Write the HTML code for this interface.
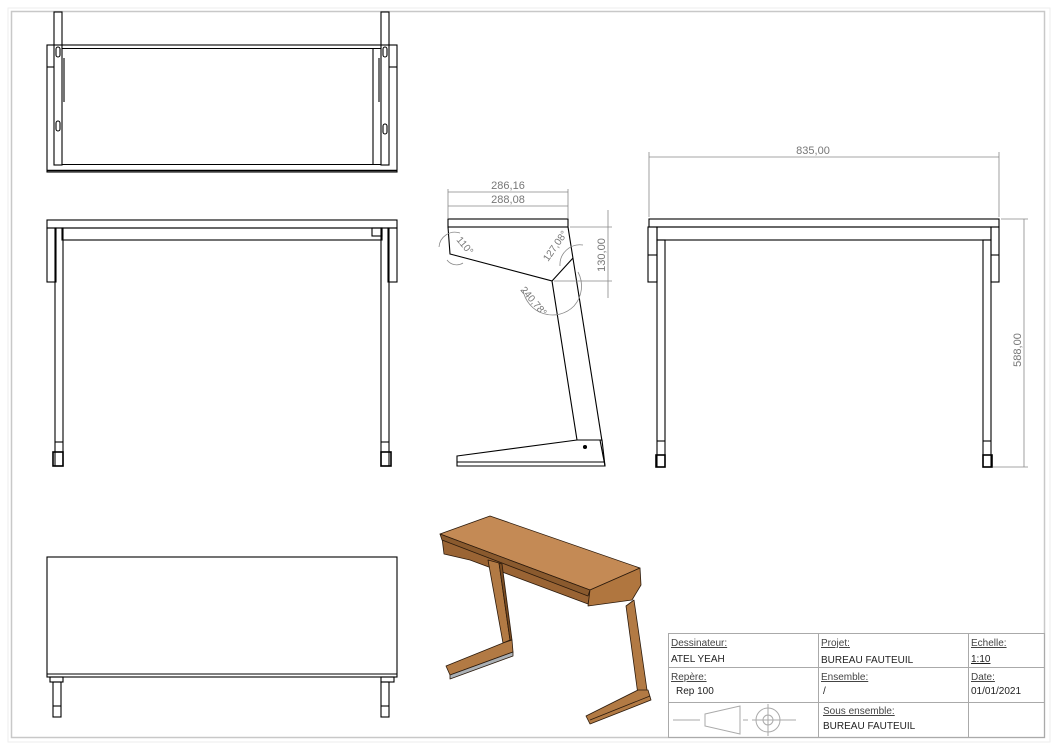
<!DOCTYPE html>
<html><head><meta charset="utf-8"><style>
html,body{margin:0;padding:0;background:#fff;}
svg{display:block;}
text{font-family:"Liberation Sans",sans-serif;}
</style></head><body>
<svg width="1058" height="748" viewBox="0 0 1058 748" xmlns="http://www.w3.org/2000/svg">
<rect x="0" y="0" width="1058" height="748" fill="#fff"/>
<rect x="11.5" y="11.5" width="1033" height="726" fill="none" stroke="#c8c8c8" stroke-width="1.5"/>
<rect x="8" y="8" width="1042" height="734" fill="none" stroke="#eee" stroke-width="1"/>

<g fill="none" stroke="#000" stroke-width="1.1">
<rect x="47" y="45" width="350" height="127"/>
<rect x="54" y="12" width="8" height="153"/>
<rect x="381" y="12" width="8" height="153"/>
<line x1="62" y1="48.5" x2="381" y2="48.5"/>
<line x1="62" y1="164.5" x2="381" y2="164.5"/>
<line x1="47" y1="170.5" x2="397" y2="170.5" stroke-width="1.5"/>
<line x1="47" y1="67" x2="54" y2="67"/>
<line x1="389" y1="67" x2="397" y2="67"/>
<line x1="64" y1="58" x2="64" y2="102"/>
<line x1="379" y1="58" x2="379" y2="102"/>
<line x1="373" y1="48.5" x2="373" y2="164.5"/>
<rect x="56" y="47" width="4" height="10" rx="2"/>
<rect x="56" y="121" width="4" height="10" rx="2"/>
<rect x="383" y="47" width="4" height="10" rx="2"/>
<rect x="383" y="124" width="4" height="10" rx="2"/>

<rect x="47" y="220" width="350" height="8"/>
<rect x="62" y="228" width="320" height="12"/>
<rect x="47" y="228" width="9" height="54"/>
<rect x="388" y="228" width="9" height="54"/>
<rect x="55" y="228" width="8" height="238"/>
<rect x="381" y="228" width="8" height="238"/>
<line x1="55" y1="442" x2="63" y2="442"/>
<line x1="381" y1="442" x2="389" y2="442"/>
<rect x="53" y="452" width="10" height="14" stroke-width="1.6"/>
<rect x="381" y="452" width="10" height="14" stroke-width="1.6"/>
<rect x="372" y="228" width="10" height="8"/>

<rect x="47" y="557" width="350" height="120"/>
<line x1="47" y1="674" x2="397" y2="674"/>
<rect x="50" y="677" width="13" height="5"/>
<rect x="381" y="677" width="13" height="5"/>
<rect x="53" y="682" width="8" height="35"/>
<rect x="381" y="682" width="8" height="35"/>
<line x1="53" y1="706" x2="61" y2="706"/>
<line x1="381" y1="706" x2="389" y2="706"/>

<rect x="448" y="219" width="120" height="8"/>
<polyline points="448,227 450,254 552,281 577,440"/>
<line x1="568" y1="227" x2="602" y2="441"/>
<line x1="552" y1="281" x2="573" y2="258"/>
<polygon points="457,456 577,440 602,440 605,466 457,466"/>
<line x1="457" y1="462" x2="605" y2="462"/>
<line x1="600" y1="440" x2="605" y2="466"/>
<circle cx="585" cy="447" r="1.5" fill="#000"/>

<rect x="649" y="219" width="350" height="8"/>
<rect x="657" y="227" width="334" height="13"/>
<rect x="648" y="227" width="9" height="55"/>
<rect x="991" y="227" width="8" height="55"/>
<rect x="657" y="240" width="8" height="227"/>
<rect x="983" y="240" width="8" height="227"/>
<line x1="648" y1="255" x2="657" y2="255"/>
<line x1="991" y1="255" x2="999" y2="255"/>
<line x1="657" y1="441" x2="665" y2="441"/>
<line x1="983" y1="441" x2="991" y2="441"/>
<rect x="656" y="455" width="9" height="12" stroke-width="1.6"/>
<rect x="983" y="455" width="9" height="12" stroke-width="1.6"/>
</g>

<g fill="none" stroke="#888" stroke-width="0.8">
<line x1="649" y1="157" x2="999" y2="157"/>
<line x1="649" y1="152" x2="649" y2="217"/>
<line x1="999" y1="152" x2="999" y2="217"/>
<line x1="1001" y1="219" x2="1028" y2="219"/>
<line x1="993" y1="467" x2="1028" y2="467"/>
<line x1="1024" y1="219" x2="1024" y2="467"/>
<line x1="448" y1="192" x2="568" y2="192"/>
<line x1="448" y1="206" x2="568" y2="206"/>
<line x1="448" y1="189" x2="448" y2="218"/>
<line x1="568" y1="189" x2="568" y2="218"/>
<line x1="570" y1="227" x2="612" y2="227"/>
<line x1="554" y1="281" x2="612" y2="281"/>
<line x1="608" y1="210" x2="608" y2="298"/>
<path d="M439,247 A16,16 0 0 1 460,233"/>
<path d="M447,260 A12,12 0 0 0 463,263"/>
<path d="M583,245 A20,20 0 0 0 560,266"/>
<path d="M523,290 A30,30 0 0 0 574,306 A30,30 0 0 0 578,272"/>
</g>
<g fill="#777" font-size="11">
<text x="813" y="154" text-anchor="middle">835,00</text>
<text x="508" y="189" text-anchor="middle">286,16</text>
<text x="508" y="203" text-anchor="middle">288,08</text>
<text transform="translate(1021,350) rotate(-90)" text-anchor="middle">588,00</text>
<text transform="translate(605,255) rotate(-90)" text-anchor="middle">130,00</text>
<text transform="translate(456,240) rotate(50)" font-size="10">110°</text>
<text transform="translate(548,262) rotate(-55)" font-size="10">127,08°</text>
<text transform="translate(520,290) rotate(50)" font-size="10">240,78°</text>
</g>

<g stroke="#2b1a0c" stroke-width="0.8" stroke-linejoin="round">
<polygon points="442,538 590,594 588,604 470,560 444,554" fill="#9a6434"/>
<polygon points="440,534 490,516 640,568 590,590" fill="#c48a55"/>
<polygon points="440,534 590,590 588,596 442,540" fill="#8a5a2e"/>
<polygon points="590,590 640,568 641,585 632,600 588,606" fill="#b0763f"/>
<polygon points="488,560 499,563 510,640 503,643" fill="#b27a44"/>
<polygon points="499,563 502,564 512,640 510,640" fill="#7a4c22"/>
<polygon points="446,666 503,643 512,640 513,652 450,675" fill="#b27a44"/>
<polygon points="450,675 513,652 513,656 450,679" fill="#aab0b5"/>
<polygon points="626,606 634,600 647,690 638,695" fill="#b27a44"/>
<polygon points="586,716 638,690 648,690 651,700 590,724" fill="#b27a44"/>
<line x1="590" y1="720" x2="650" y2="696"/>
</g>

<g fill="none" stroke="#aaa" stroke-width="1">
<rect x="668.5" y="633.5" width="376" height="104"/>
<line x1="818.5" y1="633" x2="818.5" y2="737"/>
<line x1="968.5" y1="633" x2="968.5" y2="737"/>
<line x1="668" y1="667.5" x2="1044" y2="667.5"/>
<line x1="668" y1="702.5" x2="1044" y2="702.5"/>
<line x1="673" y1="720" x2="700" y2="720"/>
<polygon points="705,714 740,706 740,734 705,726"/>
<line x1="743" y1="720" x2="748" y2="720"/>
<line x1="752" y1="720" x2="796" y2="720"/>
<line x1="768" y1="704" x2="768" y2="736"/>
<circle cx="768" cy="720" r="12"/>
<circle cx="768" cy="720" r="5"/>
</g>
<g fill="#222" font-size="10">
<text x="671" y="646" text-decoration="underline" fill="#444">Dessinateur:</text>
<text x="671" y="662">ATEL YEAH</text>
<text x="821" y="646" text-decoration="underline" fill="#444">Projet:</text>
<text x="821" y="663">BUREAU FAUTEUIL</text>
<text x="971" y="646" text-decoration="underline" fill="#444">Echelle:</text>
<text x="971" y="662" text-decoration="underline">1:10</text>
<text x="671" y="680" text-decoration="underline" fill="#444">Repère:</text>
<text x="676" y="694">Rep 100</text>
<text x="821" y="680" text-decoration="underline" fill="#444">Ensemble:</text>
<text x="823" y="694">/</text>
<text x="971" y="680" text-decoration="underline" fill="#444">Date:</text>
<text x="971" y="694">01/01/2021</text>
<text x="823" y="714" text-decoration="underline" fill="#444">Sous ensemble:</text>
<text x="823" y="729">BUREAU FAUTEUIL</text>
</g>
</svg>
</body></html>
